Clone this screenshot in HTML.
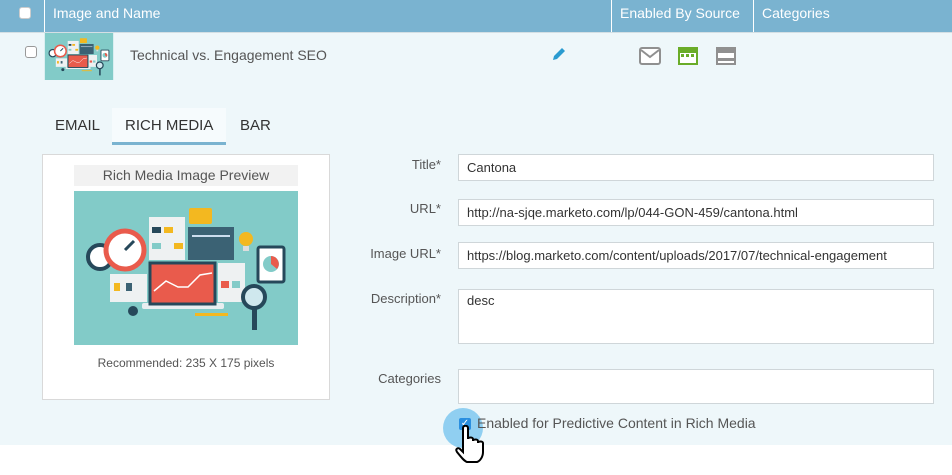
<!DOCTYPE html>
<html><head><style>
*{box-sizing:border-box;margin:0;padding:0}
body{width:952px;height:475px;background:#fff;font-family:"Liberation Sans",sans-serif;position:relative;overflow:hidden;color:#555}
.a{position:absolute}
.hd{left:0;top:0;width:952px;height:32px;background:#7ab3d0;color:#fff;font-size:14px}
.vl{top:0;width:1px;height:32px;background:#fff}
.bg{left:0;top:32px;width:952px;height:413px;background:#eef7fa;border-top:1px solid #d4dfe4}
.cb{width:12px;height:12px;border:1px solid #999;border-radius:3px;background:#fff}
.inp{left:458px;width:476px;background:#fff;border:1px solid #cfd6d9;font-size:13px;color:#333;padding:0 8px}
.lb{right:511px;font-size:13px;color:#555;text-align:right}
</style></head><body>
<div class="a hd">
 <div class="a cb" style="left:19px;top:7px;border-color:#ccc"></div>
 <div class="a vl" style="left:44px"></div>
 <div class="a" style="left:53px;top:5px">Image and Name</div>
 <div class="a vl" style="left:611px"></div>
 <div class="a" style="left:620px;top:5px">Enabled By Source</div>
 <div class="a vl" style="left:753px"></div>
 <div class="a" style="left:762px;top:5px">Categories</div>
</div>
<div class="a bg"></div>
<div class="a cb" style="left:25px;top:46px"></div>
<svg class="a" style="left:44px;top:33px" width="70" height="47" viewBox="0 0 224 154">
<g id="ill"><rect width="224" height="154" fill="#82cbc8"/>
<rect x="68" y="112" width="82" height="6" rx="2" fill="#e8eef0"/>
<rect x="76" y="72" width="65" height="41" fill="#e95b4c" stroke="#26485a" stroke-width="3"/>
<polyline points="80,100 92,90 104,96 114,96 126,84 138,82" fill="none" stroke="#fff" stroke-width="1.5"/>
<circle cx="26" cy="66" r="12" fill="#fff" stroke="#26485a" stroke-width="4"/>
<circle cx="51" cy="59" r="19" fill="#fff" stroke="#e95b4c" stroke-width="5"/>
<line x1="51" y1="59" x2="60" y2="50" stroke="#26485a" stroke-width="3"/>
<rect x="75" y="26" width="36" height="43" fill="#eef1f2"/>
<rect x="78" y="36" width="9" height="6" fill="#26485a"/><rect x="90" y="36" width="9" height="6" fill="#f3b820"/><rect x="78" y="52" width="9" height="6" fill="#82cbc8"/><rect x="100" y="52" width="9" height="6" fill="#f3b820"/>
<rect x="114" y="36" width="46" height="33" fill="#3b6274"/>
<rect x="118" y="44" width="38" height="2" fill="#cde"/>
<rect x="115" y="17" width="23" height="16" rx="2" fill="#f3b820"/>
<circle cx="172" cy="48" r="7" fill="#f3b820"/><rect x="169" y="55" width="6" height="5" fill="#ddd"/>
<rect x="184" y="56" width="26" height="35" rx="2" fill="#fff" stroke="#26485a" stroke-width="3"/>
<circle cx="197" cy="73" r="8" fill="#82cbc8"/><path d="M197 73V65A8 8 0 0 1 203 78z" fill="#e95b4c"/>
<rect x="144" y="72" width="27" height="39" fill="#eef1f2"/>
<rect x="147" y="90" width="8" height="7" fill="#e95b4c"/><rect x="158" y="90" width="8" height="7" fill="#82cbc8"/>
<rect x="36" y="83" width="37" height="28" fill="#eef1f2"/>
<rect x="40" y="92" width="6" height="8" fill="#f3b820"/><rect x="52" y="92" width="6" height="8" fill="#3b6274"/>
<circle cx="180" cy="106" r="11" fill="#cfe8ee" stroke="#26485a" stroke-width="4"/>
<rect x="178" y="117" width="5" height="22" fill="#26485a"/>
<circle cx="59" cy="120" r="5" fill="#26485a"/>
<rect x="121" y="122" width="33" height="3" fill="#f3b820"/></g></svg>
<div class="a" style="left:130px;top:47px;font-size:14px;color:#555">Technical vs. Engagement SEO</div>
<svg class="a" style="left:552px;top:47px" width="14" height="15" viewBox="0 0 14 15"><path d="M10 1l3 3-8 8-4 1 1-4z" fill="#2a9bd0"/></svg>
<svg class="a" style="left:639px;top:47px" width="22" height="18"><rect x="1" y="1" width="20" height="16" rx="2" fill="#fff" stroke="#909090" stroke-width="2"/><path d="M2 3l9 7 9-7" fill="none" stroke="#909090" stroke-width="2"/></svg>
<svg class="a" style="left:678px;top:47px" width="20" height="18"><rect x="1" y="1" width="18" height="16" fill="#fff" stroke="#6aac28" stroke-width="2"/><rect x="1" y="1" width="18" height="5" fill="#6aac28"/><rect x="3" y="7" width="3" height="3" fill="#6aac28"/><rect x="8" y="7" width="3" height="3" fill="#6aac28"/><rect x="13" y="7" width="3" height="3" fill="#6aac28"/></svg>
<svg class="a" style="left:716px;top:47px" width="20" height="18"><rect x="1" y="1" width="18" height="16" fill="#fff" stroke="#909090" stroke-width="2"/><rect x="1" y="1" width="18" height="5" fill="#909090"/><rect x="2" y="11" width="16" height="3" fill="#909090"/></svg>
<div class="a" style="left:112px;top:108px;width:114px;height:37px;background:#f6fbfd;border-bottom:3px solid #7ab3d0"></div>
<div class="a" style="left:55px;top:117px;font-size:15px;color:#333">EMAIL</div>
<div class="a" style="left:125px;top:117px;font-size:15px;color:#333">RICH MEDIA</div>
<div class="a" style="left:240px;top:117px;font-size:15px;color:#333">BAR</div>
<div class="a" style="left:42px;top:154px;width:288px;height:246px;background:#fff;border:1px solid #d9d9d9"></div>
<div class="a" style="left:74px;top:165px;width:224px;height:21px;background:#f2f2f2;text-align:center;font-size:14px;color:#555;line-height:21px">Rich Media Image Preview</div>
<svg class="a" style="left:74px;top:191px" width="224" height="154" viewBox="0 0 224 154"><use href="#ill"/></svg>
<div class="a" style="left:42px;top:356px;width:288px;text-align:center;font-size:12px;color:#555">Recommended: 235 X 175 pixels</div>
<div class="a lb" style="top:157px">Title*</div>
<div class="a inp" style="top:154px;height:27px;line-height:25px">Cantona</div>
<div class="a lb" style="top:201px">URL*</div>
<div class="a inp" style="top:199px;height:27px;line-height:25px">http://na-sjqe.marketo.com/lp/044-GON-459/cantona.html</div>
<div class="a lb" style="top:246px">Image URL*</div>
<div class="a inp" style="top:242px;height:27px;line-height:25px;white-space:nowrap;overflow:hidden">https://blog.marketo.com/content/uploads/2017/07/technical-engagement</div>
<div class="a lb" style="top:291px">Description*</div>
<div class="a inp" style="top:289px;height:55px;padding-top:3px">desc</div>
<div class="a lb" style="top:371px">Categories</div>
<div class="a inp" style="top:369px;height:35px"></div>
<div class="a" style="left:443px;top:408px;width:40px;height:40px;border-radius:50%;background:#7fc8ee;opacity:.85"></div>
<div class="a" style="left:459px;top:418px;width:12px;height:12px;border-radius:2px;background:#2a8fe0;color:#fff;font-size:10px;line-height:12px;text-align:center">✓</div>
<div class="a" style="left:477px;top:415px;font-size:14px;color:#555">Enabled for Predictive Content in Rich Media</div>
<svg class="a" style="left:455px;top:425px" width="32" height="40" viewBox="0 0 32 40"><path d="M8 3c0-3 5-3 5 0v11c0-2 5-2 5 0v2c0-2 5-2 5 0v2c0-2 5-2 5 0v9c0 5-3 9-6 10H12c-3-1-6-5-10-10-2-3 1-5 3-3l3 3z" fill="#fff" stroke="#000" stroke-width="2"/></svg>
</body></html>
